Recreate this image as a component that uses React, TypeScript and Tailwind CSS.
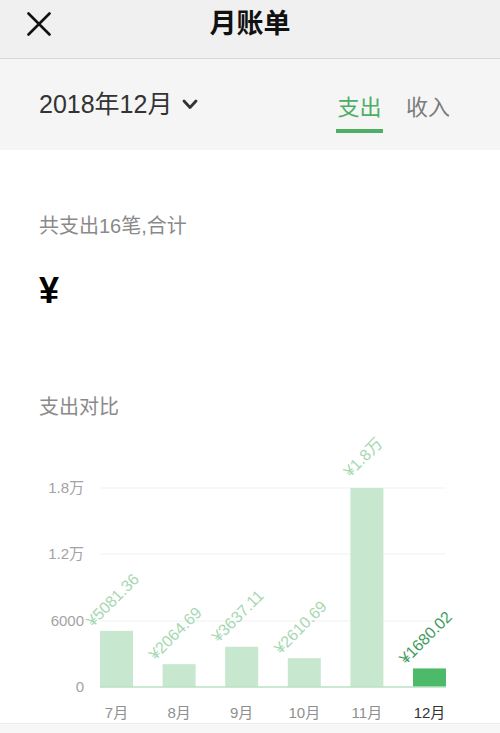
const FONT = "font-['Liberation_Sans','Noto_Sans_CJK_SC',sans-serif]";

const months = [
  { label: "7月", value: 5081.36, text: "¥5081.36" },
  { label: "8月", value: 2064.69, text: "¥2064.69" },
  { label: "9月", value: 3637.11, text: "¥3637.11" },
  { label: "10月", value: 2610.69, text: "¥2610.69" },
  { label: "11月", value: 18000, text: "¥1.8万" },
  { label: "12月", value: 1680.02, text: "¥1680.02", current: true },
];

const yTicks = [
  { y: 487, label: "1.8万" },
  { y: 553, label: "1.2万" },
  { y: 620, label: "6000" },
  { y: 686, label: "0" },
];

function BarChart() {
  const base = 686;
  const scale = (686 - 487) / 18000;
  return (
    <svg
      viewBox="0 430 500 292"
      width={500}
      height={292}
      className="block"
      style={{ fontFamily: "'Liberation Sans','Noto Sans CJK SC',sans-serif" }}
    >
      {yTicks.map((t) => (
        <g key={t.label}>
          {t.y !== base && (
            <line x1={100} x2={446} y1={t.y} y2={t.y} stroke="#f1f1f1" strokeWidth={1} />
          )}
          <text x={84} y={t.y + 5} textAnchor="end" fontSize={15} fill="#a3a3a3">
            {t.label}
          </text>
        </g>
      ))}
      {months.map((m, i) => {
        const left = 100 + i * 62.6;
        const h = m.value * scale;
        const top = base - h;
        const cx = left + 16.5;
        return (
          <g key={m.label}>
            <rect x={left} y={top} width={33} height={h} fill={m.current ? "#4dba6a" : "#c7e7cf"} />
            <text
              x={cx}
              y={top - 27}
              textAnchor="middle"
              fontSize={16}
              fill={m.current ? "#3f9b5b" : "#a6d7b2"}
              transform={`rotate(-45 ${cx} ${top - 27})`}
            >
              {m.text}
            </text>
            <text x={cx} y={717} textAnchor="middle" fontSize={15} fill={m.current ? "#333333" : "#8f8f8f"}>
              {m.label}
            </text>
          </g>
        );
      })}
      <line x1={100} x2={446} y1={base} y2={base} stroke="#b9e2c3" strokeWidth={1.5} />
    </svg>
  );
}

export default function App() {
  return (
    <div className={`w-[500px] h-[733px] overflow-hidden bg-white flex flex-col ${FONT}`}>
      {/* Nav bar */}
      <div className="h-[59px] shrink-0 bg-[#f0f0f0] border-b border-[#d8d8d8] grid grid-cols-[1fr_auto_1fr] items-center pb-[10px]">
        <div className="pl-[27px] flex items-center">
          <svg width="24" height="24" viewBox="0 0 24 24">
            <path d="M1.5 1.5 L22.5 22.5 M22.5 1.5 L1.5 22.5" stroke="#111" strokeWidth="2.6" strokeLinecap="round" />
          </svg>
        </div>
        <div className="text-[27px] font-semibold text-[#111] leading-none">月账单</div>
        <div />
      </div>

      {/* Month + tabs */}
      <div className="h-[91px] shrink-0 bg-[#f5f5f5] flex items-center justify-between pl-[39px] pr-[50px]">
        <div className="flex items-center gap-[10px]">
          <span className="text-[25px] text-[#333]">2018年12月</span>
          <svg width="16" height="11" viewBox="0 0 16 11">
            <path d="M2 2 L8 8.5 L14 2" stroke="#333" strokeWidth="2.8" fill="none" strokeLinecap="round" strokeLinejoin="round" />
          </svg>
        </div>
        <div className="flex items-start gap-[23px] pt-[16px]">
          <div className="flex flex-col items-center">
            <span className="text-[22px] text-[#4dae65] leading-[30px]">支出</span>
            <div className="mt-[6px] w-[47px] h-[4px] bg-[#4dae65]" />
          </div>
          <span className="text-[22px] text-[#7a7a7a] leading-[30px]">收入</span>
        </div>
      </div>

      {/* Content */}
      <div className="flex-1 flex flex-col">
        <div className="pl-[39px] pt-[62px] text-[20px] leading-[28px] text-[#8a8a8a]">共支出16笔,合计</div>
        <div className="pl-[39px] mt-[31px] text-[36px] font-bold leading-[40px] text-black">¥</div>
        <div className="pl-[39px] mt-[82px] text-[20px] leading-[28px] text-[#8a8a8a]">支出对比</div>
        <div className="mt-[10px]">
          <BarChart />
        </div>
        <div className="flex-1 bg-[#f7f7f7] border-t border-[#ececec]" />
      </div>
    </div>
  );
}
